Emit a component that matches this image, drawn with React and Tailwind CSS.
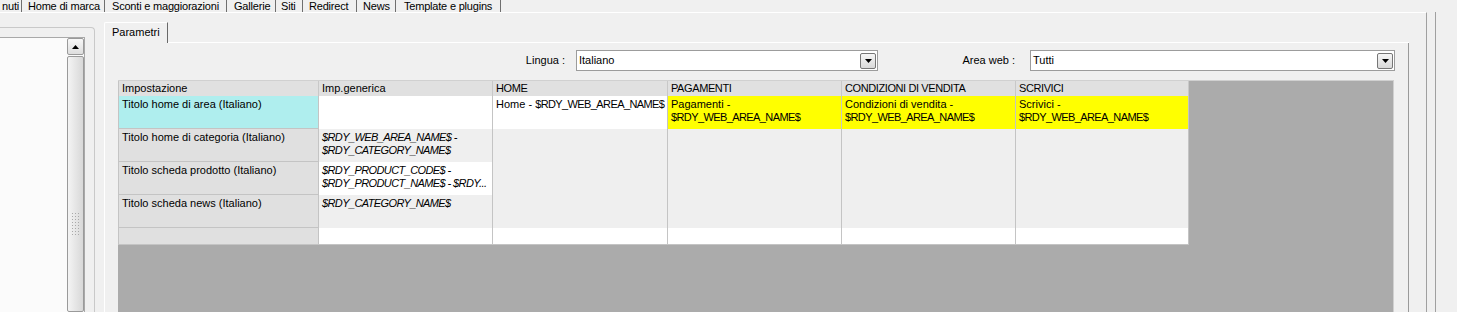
import React from 'react';

const topTabs = [
  { label: 'nuti', cls: 'w-[22px] justify-end pr-[2px]' },
  { label: 'Home di marca', cls: 'w-[83px] pl-[6px]' },
  { label: 'Sconti e maggiorazioni', cls: 'w-[122px] pl-[7px]' },
  { label: 'Gallerie', cls: 'w-[49px] pl-[7px]' },
  { label: 'Siti', cls: 'w-[27px] pl-[5px]' },
  { label: 'Redirect', cls: 'w-[54px] pl-[6px]' },
  { label: 'News', cls: 'w-[39px] pl-[6px]' },
  { label: 'Template e plugins', cls: 'w-[105px] pl-[8px]' },
];

function TopTabs() {
  return (
    <div className="flex h-[12px] shrink-0 overflow-hidden tracking-[-0.2px]">
      {topTabs.map((t) => (
        <div
          key={t.label}
          className={`flex h-[12px] shrink-0 items-center whitespace-nowrap border-r border-[#6f6f6f] leading-[12px] ${t.cls}`}
        >
          <span className="-mt-[1px]">{t.label}</span>
        </div>
      ))}
    </div>
  );
}

function DownArrow() {
  return (
    <div className="flex h-[16px] w-[16px] items-center justify-center rounded-[2px] border border-[#767676] bg-gradient-to-b from-[#f6f6f6] to-[#d9d9d9]">
      <svg width="7" height="4" viewBox="0 0 7 4">
        <polygon points="0,0 7,0 3.5,4" fill="#000" />
      </svg>
    </div>
  );
}

function Combo({ value, width }) {
  return (
    <div className={`flex h-[21px] items-center justify-between border border-[#9c9c9c] bg-white pl-[2px] pr-[1px] ${width}`}>
      <span>{value}</span>
      <DownArrow />
    </div>
  );
}

function LeftPanel() {
  return (
    <div className="mt-[14px] flex w-[95px] shrink-0 flex-col rounded-tr-[4px] border-t border-r border-[#c9c9c9]">
      <div className="mt-[9px] flex w-[85px] flex-1 justify-end border-t border-r border-[#a9a9a9] bg-[#fbfbfb]">
        <div className="flex w-[17px] flex-col">
          <div className="flex h-[17px] items-center justify-center rounded-[2px] border border-[#9a9a9a] bg-gradient-to-b from-[#f8f8f8] to-[#dedede]">
            <svg width="7" height="4" viewBox="0 0 7 4">
              <polygon points="3.5,0 7,4 0,4" fill="#000" />
            </svg>
          </div>
          <div className="mt-[1px] flex flex-1 items-start justify-center rounded-[2px] border border-[#9a9a9a] bg-gradient-to-r from-[#f4f4f4] to-[#d8d8d8] pt-[156px]">
            <svg width="7" height="23" viewBox="0 0 7 23">
              {[0, 3, 6, 9, 12, 15, 18, 21].map((y) =>
                [0, 3, 6].map((x) => (
                  <rect key={`${x}-${y}`} x={x} y={y} width="1" height="1" fill="#a9a9a9" />
                ))
              )}
            </svg>
          </div>
        </div>
      </div>
    </div>
  );
}

const cols = ['Impostazione', 'Imp.generica', 'HOME', 'PAGAMENTI', 'CONDIZIONI DI VENDITA', 'SCRIVICI'];

// lines: [text, narrow] — uppercase strings are squeezed to match Tahoma widths
const rows = [
  {
    label: 'Titolo home di area (Italiano)',
    first: 'bg-[#afeeee]',
    cells: [
      { bg: 'bg-white', lines: [] },
      { bg: 'bg-white', lines: [['Home - ', '$RDY_WEB_AREA_NAME$']] },
      { bg: 'bg-[#ffff00]', lines: [['Pagamenti -', ''], ['', '$RDY_WEB_AREA_NAME$']] },
      { bg: 'bg-[#ffff00]', lines: [['Condizioni di vendita -', ''], ['', '$RDY_WEB_AREA_NAME$']] },
      { bg: 'bg-[#ffff00]', lines: [['Scrivici -', ''], ['', '$RDY_WEB_AREA_NAME$']] },
    ],
  },
  {
    label: 'Titolo home di categoria (Italiano)',
    first: 'bg-[#e0e0e0]',
    cells: [
      { bg: 'bg-[#efefef]', italic: true, lines: [['', '$RDY_WEB_AREA_NAME$ -'], ['', '$RDY_CATEGORY_NAME$']] },
      { bg: 'bg-[#efefef]', lines: [] },
      { bg: 'bg-[#efefef]', lines: [] },
      { bg: 'bg-[#efefef]', lines: [] },
      { bg: 'bg-[#efefef]', lines: [] },
    ],
  },
  {
    label: 'Titolo scheda prodotto (Italiano)',
    first: 'bg-[#e0e0e0]',
    cells: [
      { bg: 'bg-white', italic: true, lines: [['', '$RDY_PRODUCT_CODE$ -'], ['', '$RDY_PRODUCT_NAME$ - $RDY...']] },
      { bg: 'bg-[#efefef]', lines: [] },
      { bg: 'bg-[#efefef]', lines: [] },
      { bg: 'bg-[#efefef]', lines: [] },
      { bg: 'bg-[#efefef]', lines: [] },
    ],
  },
  {
    label: 'Titolo scheda news (Italiano)',
    first: 'bg-[#e0e0e0]',
    cells: [
      { bg: 'bg-[#efefef]', italic: true, lines: [['', '$RDY_CATEGORY_NAME$']] },
      { bg: 'bg-[#efefef]', lines: [] },
      { bg: 'bg-[#efefef]', lines: [] },
      { bg: 'bg-[#efefef]', lines: [] },
      { bg: 'bg-[#efefef]', lines: [] },
    ],
  },
];

function Table() {
  return (
    <div className="ml-[13px] flex w-[1276px] shrink-0 flex-col border-t border-r border-[#d0d0d0] bg-[#ababab]">
      <div className="grid w-[1071px] grid-cols-[200px_174px_175px_174px_174px_173px] grid-rows-[15px_33px_33px_33px_33px_16px] border-l border-b border-[#c4c4c4]">
        {cols.map((c) => (
          <div
            key={c}
            className={`overflow-hidden whitespace-nowrap border-r border-[#c8c8c8] bg-[#e0e0e0] px-[3px] leading-[14px] ${c === c.toUpperCase() ? 'tracking-[-0.4px]' : ''}`}
          >
            {c}
          </div>
        ))}
        {rows.map((r) => (
          <React.Fragment key={r.label}>
            <div className={`overflow-hidden whitespace-nowrap border-r border-b border-[#c4c4c4] px-[3px] pt-[2px] leading-[13px] ${r.first}`}>
              {r.label}
            </div>
            {r.cells.map((cell, i) => (
              <div
                key={i}
                className={`overflow-hidden whitespace-nowrap border-r border-[#c4c4c4] px-[3px] pt-[2px] leading-[13px] ${cell.bg} ${cell.italic ? 'italic' : ''}`}
              >
                {cell.lines.map(([plain, narrow], j) => (
                  <div key={j}>
                    {plain}
                    {narrow && <span className="tracking-[-0.6px]">{narrow}</span>}
                  </div>
                ))}
              </div>
            ))}
          </React.Fragment>
        ))}
        <div className="border-r border-[#c4c4c4] bg-[#e0e0e0]" />
        {[0, 1, 2, 3, 4].map((i) => (
          <div key={i} className="border-r border-[#c4c4c4] bg-white" />
        ))}
      </div>
    </div>
  );
}

export default function App() {
  return (
    <div className="flex h-[312px] w-[1457px] flex-col overflow-hidden bg-[#f0f0f0] font-['Liberation_Sans',Arial,sans-serif] text-[11px] text-black">
      <TopTabs />
      <div className="flex min-h-0 flex-1">
        <div className="flex w-[1427px] shrink-0 border-t border-r border-t-white border-r-[#a0a0a0]">
          <LeftPanel />
          <div className="ml-[9px] flex w-[1305px] shrink-0 flex-col">
            <div className="mt-[9px] flex h-[21px] shrink-0">
              <div className="w-[64px] rounded-tl-[2px] border-t border-l border-r border-t-white border-l-white border-r-[#696969] pl-[7px] leading-[19px]">
                Parametri
              </div>
              <div className="flex-1 border-b border-white" />
            </div>
            <div className="flex flex-1 flex-col border-l border-r border-l-white border-r-[#9a9a9a]">
              <div className="mt-[7px] flex h-[21px] shrink-0 items-center">
                <div className="w-[460px] text-right">Lingua :</div>
                <div className="ml-[11px]">
                  <Combo value="Italiano" width="w-[302px]" />
                </div>
                <div className="w-[137px] text-right">Area web :</div>
                <div className="ml-[15px]">
                  <Combo value="Tutti" width="w-[365px]" />
                </div>
              </div>
              <div className="mt-[9px] flex min-h-0 flex-1">
                <Table />
              </div>
            </div>
          </div>
        </div>
        <div className="w-[8px] shrink-0" />
        <div className="flex-1 border-l border-[#a0a0a0]" />
      </div>
    </div>
  );
}
